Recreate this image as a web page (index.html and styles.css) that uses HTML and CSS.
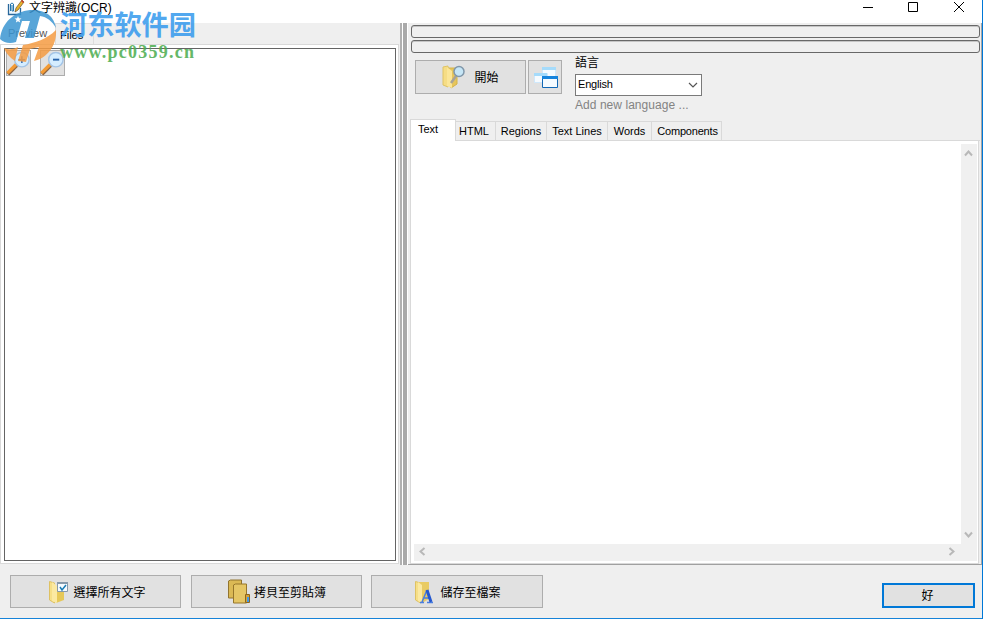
FILE: index.html
```html
<!DOCTYPE html>
<html lang="zh-Hant">
<head>
<meta charset="utf-8">
<title>文字辨識(OCR)</title>
<link rel="stylesheet" href="styles.css">
</head>
<body>
<div class="window">
  <header class="titlebar">
    <svg class="appicon" width="18" height="16" viewBox="0 0 18 16"><path d="M1.500 4v10.500h12V8" fill="#eef8ff" stroke="#29679b" stroke-width="1.300"/><path d="M3.500 11V4q1.500-2 3 0v7H5V5" fill="none" stroke="#2877ac"/><path d="M8 12l1-4 6-8 2 2-6 8z" fill="#e8b32c" stroke="#705024" stroke-width=".7"/><path d="M14 1l1-1 2 2-1 1z" fill="#cc3c30"/></svg>
    <span class="title">文字辨識(OCR)</span>
    <svg class="controls" width="104" height="16" viewBox="0 0 104 16" fill="none" stroke="#000"><path d="M1 7.500h10M46.500 2.500h9v9h-9zM92 2l10 10M102 2L92 12"/></svg>
  </header>
  <main class="panes">
    <section class="left">
      <nav class="lefttabs"><span class="preview">Preview</span><span class="files">Files</span></nav>
      <div class="page"><div class="canvas">
        <button class="zoombtn"><svg width="25" height="25" viewBox="0 0 26 26"><path d="M2 24l9-9" stroke="#8c6544" stroke-width="4"/><path d="M1.500 23l9-9" stroke="#f39b35" stroke-width="3.500"/><circle cx="16.500" cy="9" r="7.500" fill="#d5edff" stroke="#a3c4e6" stroke-width="1.500"/><path d="M13 9h7M16.500 5.500v7" stroke="#2864ac" stroke-width="1.500"/></svg></button>
        <button class="zoombtn"><svg width="25" height="25" viewBox="0 0 26 26"><path d="M2 24l9-9" stroke="#8c6544" stroke-width="4"/><path d="M1.500 23l9-9" stroke="#f39b35" stroke-width="3.500"/><circle cx="16.500" cy="9" r="7.500" fill="#d5edff" stroke="#a3c4e6" stroke-width="1.500"/><path d="M13.500 9h6.500" stroke="#2864ac" stroke-width="2"/></svg></button>
      </div></div>
    </section>
    <div class="splitter"></div>
    <section class="right">
      <div class="progress"></div><div class="progress"></div>
      <div class="tools">
        <button class="btn start"><svg width="24" height="24" viewBox="0 0 24 24"><path d="M1 2l5-1v21l-5-2z" fill="#f6dd85" stroke="#dfc365"/><path d="M6 3h9v16l-6 4z" fill="#e6c55b" stroke="#d4b349"/><path d="M5 2l5 4v17l-5-2z" fill="#fbe698"/><path d="M14 11l-5 7" stroke="#a6a39a" stroke-width="2.500"/><circle cx="17" cy="6.500" r="5" fill="#c6e6f6" stroke="#8097aa" stroke-width="1.500"/></svg><span>開始</span></button>
        <button class="btn windows"><svg width="25" height="23" viewBox="0 0 25 23"><path d="M9.500 1.500h13v10h-13z" fill="#f6fbff" stroke="#cfe8fb"/><path d="M9 1h14v3H9z" fill="#a5dbfb"/><path d="M1.500 7.500h13v9h-13z" fill="#f6fbff" stroke="#cfe8fb"/><path d="M1 7h13v3H1z" fill="#a5dbfb"/><path d="M9.500 10.500h15v11h-15z" fill="#f5fbff" stroke="#1268b5"/><path d="M9 10h16v3H9z" fill="#1684dd"/></svg></button>
        <div class="lang"><label>語言</label><div class="select"><span>English</span><svg width="10" height="6" viewBox="0 0 10 6"><path d="M1 1l4 4 4-4" fill="none" stroke="#555" stroke-width="1.200"/></svg></div><span class="add">Add new language ...</span></div>
      </div>
      <nav class="tabs"><span class="tab active">Text</span><span class="tab html">HTML</span><span class="tab regions">Regions</span><span class="tab lines">Text Lines</span><span class="tab words">Words</span><span class="tab components">Components</span></nav>
      <div class="output"><div class="text"></div>
        <div class="vbar"><svg width="9" height="7" viewBox="0 0 9 7"><path d="M1 5.500l3.500-4 3.500 4"/></svg><svg width="9" height="7" viewBox="0 0 9 7"><path d="M1 1.500l3.500 4 3.500-4"/></svg></div>
        <div class="hbar"><svg width="7" height="9" viewBox="0 0 7 9"><path d="M5.500 1l-4 3.500 4 3.500"/></svg><svg width="7" height="9" viewBox="0 0 7 9"><path d="M1.500 1l4 3.500-4 3.500"/></svg></div>
      </div>
    </section>
  </main>
  <footer class="footer">
    <button class="btn action"><svg width="22" height="24" viewBox="0 0 22 24"><path d="M2.500 1.500l5 1.500v20l-5-3z" fill="#f6df87" stroke="#dec163"/><path d="M7 6h10v14l-8 3z" fill="#e6c858"/><path d="M5 2l5 4v17l-5-2z" fill="#fbe9a2"/><path d="M10.500 2.500h10v9h-10z" fill="#f5fbff" stroke="#8799aa"/><path d="M10 2h11v2H10z" fill="#8799aa"/><path d="M13 7l2 3 4-5" fill="none" stroke="#197bb4" stroke-width="1.500"/></svg><span>選擇所有文字</span></button>
    <button class="btn action"><svg width="23" height="25" viewBox="0 0 23 25"><path d="M1.500 2l2-1h11v18h-13z" fill="#dbb954" stroke="#92742e"/><path d="M6.500 6l2-1h11v19h-13z" fill="#e5c665" stroke="#97772b"/><path d="M18.500 15.500h4v8h-4z" fill="#d5a238" stroke="#8c651c"/><path d="M20 18h2v5h-2z" fill="#3d99ec"/></svg><span>拷貝至剪貼簿</span></button>
    <button class="btn action"><svg width="20" height="24" viewBox="0 0 20 24"><path d="M2.500 1.500l5 1.500v20l-5-3z" fill="#f6df87" stroke="#dfc263"/><path d="M6 2h10v17l-7 4z" fill="#e9cb63"/><path d="M5 2l4 3v18l-4-2z" fill="#fbe9a2"/><path d="M7 22.500h4M14 22.500h6M9 22l5-12M11 18h6" fill="none" stroke="#4a7ee0" stroke-width="1.500"/><path d="M14 10l4 12" stroke="#2458cf" stroke-width="3"/></svg><span>儲存至檔案</span></button>
    <button class="btn ok">好</button>
  </footer>
  <div class="watermark">
    <svg width="58" height="63" viewBox="0 0 58 63"><path d="M0 39C2 22 14 12 30 10c14-1 24 5 26 18-4-7-9-11-16-12l-6 22h-9l5-17h-8l-6 21C10 44 4 43 0 39z" fill="#3b96d2"/><path d="M18 16l1 2.300 2.500.2-2 1.600.7 2.400-2.200-1.300-2.100 1.300.6-2.400-2-1.600 2.500-.2z" fill="#fff"/><path d="M4 48q7 3 14-1l-3 14Q7 56 4 48z" fill="#f59c43"/><path d="M23 45c12-2 24-6 33-15 1 16-9 28-22 31l5-14-9 2-4 13-8-1z" fill="#f59c43"/></svg>
    <div class="brand"><strong>河东软件园</strong><b>www.pc0359.cn</b></div>
  </div>
</div>
</body>
</html>
```
FILE: styles.css
```css
* { box-sizing: border-box; }
body { margin: 0; font: 11px/13px "Liberation Sans", "Noto Sans CJK TC", sans-serif; color: #000; }
svg { display: block; flex: none; }
button { font: inherit; margin: 0; padding: 0; }
.window { position: relative; width: 983px; height: 619px; overflow: hidden; display: flex; flex-direction: column; background: #efefef; border-right: 1px solid #0078d7; border-bottom: 1px solid #1683d8; }
.titlebar { height: 23px; flex: none; background: #fff; display: flex; align-items: flex-start; padding: 0 16px 0 7px; }
.title { font-size: 12px; line-height: 17px; margin-left: 4px; white-space: nowrap; }
.controls { margin-left: auto; }
.panes { height: 542px; flex: none; display: flex; }
.left { width: 400px; display: flex; flex-direction: column; }
.lefttabs { height: 21px; display: flex; }
.lefttabs span { height: 21px; }
.lefttabs .preview { width: 55px; background: #fff; padding: 4px 0 0 8px; color: #555; }
.lefttabs .files { width: 39px; border: 1px solid #ddd; border-width: 1px 1px 0; padding: 5px 0 0 4px; }
.page { width: 399px; height: 520px; padding: 3px 2px 2px 3px; background: #fff; border: 1px solid #d9d9d9; }
.canvas { width: 392px; height: 513px; border: 1px solid #646464; display: flex; gap: 9px; padding: 1px; }
.zoombtn { width: 25px; height: 26px; background: #e1e1e1; border: 1px solid #adadad; }
.zoombtn svg { margin: -1px; }
.splitter { width: 8px; border-left: 2px solid #b0b0b0; background: linear-gradient(90deg, #fff 1px, #a9a9a9 1px 5px, #fff 5px); }
.right { width: 574px; padding: 2px 1px 0 3px; border-right: 1px solid #a5a5a5; border-bottom: 1px solid #a0a0a0; }
.progress { width: 569px; height: 13px; border: 1px solid #686868; border-radius: 3px; box-shadow: inset 0 1px #c5c5c5; margin-bottom: 2px; }
.tools { height: 64px; padding: 5px 0 0 4px; display: flex; }
.btn { display: flex; align-items: center; justify-content: center; background: #e1e1e1; border: 1px solid #adadad; font-size: 12px; line-height: 16px; color: #000; }
.btn span { padding-top: 2px; }
.start { width: 111px; height: 34px; gap: 8px; margin-right: 2px; }
.windows { width: 34px; height: 34px; margin-right: 13px; }
.lang { width: 128px; display: flex; flex-direction: column; margin-top: -5px; }
.lang label { font-size: 12px; line-height: 16px; height: 19px; }
.select { width: 127px; height: 22px; background: #fff; border: 1px solid #7a7a7a; display: flex; align-items: center; justify-content: space-between; padding: 0 3px 0 2px; }
.select span { letter-spacing: -.2px; padding-bottom: 1px; }
.add { color: #838383; font-size: 12px; line-height: 16px; margin-top: 1px; letter-spacing: .05px; white-space: nowrap; }
.tabs { height: 22px; display: flex; align-items: flex-end; margin-left: -1px; border-bottom: 1px solid #d9d9d9; }
.tab { height: 19px; border: 1px solid #d9d9d9; border-left: 0; border-bottom: 0; text-align: center; line-height: 19px; white-space: nowrap; }
.tab.active { width: 46px; height: 22px; margin-bottom: -1px; background: #fff; border-left: 1px solid #d9d9d9; border-bottom: 0; padding-right: 10px; }
.html { width: 40px; padding-right: 3px; } .regions { width: 51px; } .lines { width: 61px; } .words { width: 44px; }
.components { width: 70px; padding-left: 2px; letter-spacing: -.2px; }
.output { width: 569px; height: 423px; margin-left: -1px; background: #fff; border: 1px solid #d9d9d9; border-top: 0; padding: 3px 1px 2px 3px; display: grid; grid-template-columns: 547px 16px; grid-template-rows: 400px 17px; }
.output svg path { fill: none; stroke: #b8b8b8; stroke-width: 2; }
.vbar, .hbar { background: #f0f0f0; display: flex; align-items: center; justify-content: space-between; }
.vbar { flex-direction: column; padding: 6px 1px 6px 0; }
.hbar { grid-column: 1 / 3; padding: 0 22px 2px 5px; }
.footer { height: 53px; padding: 10px 7px 0 10px; display: flex; }
.action { width: 171px; height: 33px; margin-right: 10px; gap: 4px; }
.action:nth-child(1) { padding-left: 2px; }
.action:nth-child(3) { width: 172px; margin-left: -1px; gap: 7px; }
.ok { width: 93px; height: 25px; margin: 8px 0 0 auto; padding-right: 2px; border: 2px solid #0078d7; }
.watermark { position: absolute; left: 0; top: 0; display: flex; opacity: .85; pointer-events: none; }
.brand { display: flex; flex-direction: column; margin-left: 2px; white-space: nowrap; }
.brand strong { font: 700 27.200px/35px "Noto Sans CJK SC", sans-serif; color: #3499ed; margin-top: 6px; }
.brand b { font: 700 18px/20px "Liberation Serif", serif; color: #4bac4e; letter-spacing: 1.250px; margin-top: 1px; }
```
